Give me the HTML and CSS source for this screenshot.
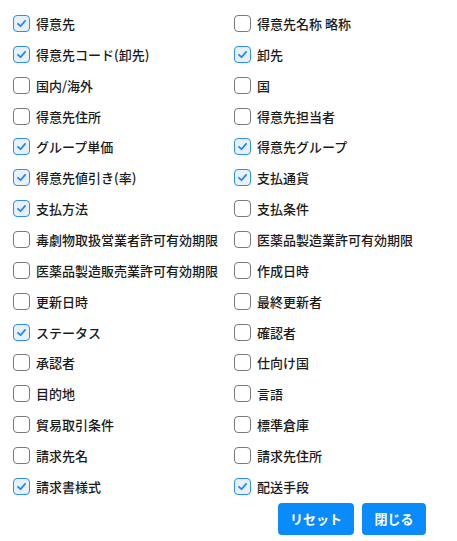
FILE: index.html
```html
<!DOCTYPE html>
<html lang="ja">
<head>
<meta charset="utf-8">
<link rel="stylesheet" href="styles.css">
</head>
<body>
<div class="panel">
  <div class="grid">
    <label class="item"><span class="box on"><svg viewBox="0 0 17 17"><path d="M4.5 8.8 L7.4 11.6 L12.6 5.6"/></svg></span>得意先</label>
    <label class="item"><span class="box"></span>得意先名称 略称</label>
    <label class="item"><span class="box on"><svg viewBox="0 0 17 17"><path d="M4.5 8.8 L7.4 11.6 L12.6 5.6"/></svg></span>得意先コード(卸先)</label>
    <label class="item"><span class="box on"><svg viewBox="0 0 17 17"><path d="M4.5 8.8 L7.4 11.6 L12.6 5.6"/></svg></span>卸先</label>
    <label class="item"><span class="box"></span>国内/海外</label>
    <label class="item"><span class="box"></span>国</label>
    <label class="item"><span class="box"></span>得意先住所</label>
    <label class="item"><span class="box"></span>得意先担当者</label>
    <label class="item"><span class="box on"><svg viewBox="0 0 17 17"><path d="M4.5 8.8 L7.4 11.6 L12.6 5.6"/></svg></span>グループ単価</label>
    <label class="item"><span class="box on"><svg viewBox="0 0 17 17"><path d="M4.5 8.8 L7.4 11.6 L12.6 5.6"/></svg></span>得意先グループ</label>
    <label class="item"><span class="box on"><svg viewBox="0 0 17 17"><path d="M4.5 8.8 L7.4 11.6 L12.6 5.6"/></svg></span>得意先値引き(率)</label>
    <label class="item"><span class="box on"><svg viewBox="0 0 17 17"><path d="M4.5 8.8 L7.4 11.6 L12.6 5.6"/></svg></span>支払通貨</label>
    <label class="item"><span class="box on"><svg viewBox="0 0 17 17"><path d="M4.5 8.8 L7.4 11.6 L12.6 5.6"/></svg></span>支払方法</label>
    <label class="item"><span class="box"></span>支払条件</label>
    <label class="item"><span class="box"></span>毒劇物取扱営業者許可有効期限</label>
    <label class="item"><span class="box"></span>医薬品製造業許可有効期限</label>
    <label class="item"><span class="box"></span>医薬品製造販売業許可有効期限</label>
    <label class="item"><span class="box"></span>作成日時</label>
    <label class="item"><span class="box"></span>更新日時</label>
    <label class="item"><span class="box"></span>最終更新者</label>
    <label class="item"><span class="box on"><svg viewBox="0 0 17 17"><path d="M4.5 8.8 L7.4 11.6 L12.6 5.6"/></svg></span>ステータス</label>
    <label class="item"><span class="box"></span>確認者</label>
    <label class="item"><span class="box"></span>承認者</label>
    <label class="item"><span class="box"></span>仕向け国</label>
    <label class="item"><span class="box"></span>目的地</label>
    <label class="item"><span class="box"></span>言語</label>
    <label class="item"><span class="box"></span>貿易取引条件</label>
    <label class="item"><span class="box"></span>標準倉庫</label>
    <label class="item"><span class="box"></span>請求先名</label>
    <label class="item"><span class="box"></span>請求先住所</label>
    <label class="item"><span class="box on"><svg viewBox="0 0 17 17"><path d="M4.5 8.8 L7.4 11.6 L12.6 5.6"/></svg></span>請求書様式</label>
    <label class="item"><span class="box on"><svg viewBox="0 0 17 17"><path d="M4.5 8.8 L7.4 11.6 L12.6 5.6"/></svg></span>配送手段</label>
  </div>
  <div class="actions">
    <button class="btn reset">リセット</button>
    <button class="btn close">閉じる</button>
  </div>
</div>
</body>
</html>
```

FILE: styles.css
```css
html, body {
  margin: 0;
  padding: 0;
  background: #fff;
}
body {
  font-family: "Noto Sans CJK JP", "Noto Sans", sans-serif;
  color: #1a1a1a;
}
.panel {
  width: 457px;
  height: 541px;
  box-sizing: border-box;
  padding: 15px 31px 0 13px;
}
.grid {
  display: grid;
  grid-template-columns: 221px 1fr;
  grid-auto-rows: 17px;
  row-gap: 13.87px;
}
.item {
  display: flex;
  align-items: center;
  gap: 6px;
  font-size: 13px;
  font-weight: 500;
  line-height: 17px;
  white-space: nowrap;
}
.box {
  width: 17px;
  height: 17px;
  box-sizing: border-box;
  border: 1px solid #7a7a7a;
  border-radius: 4px;
  background: #fff;
  flex: none;
  display: flex;
}
.box.on {
  border-color: #2f8ff0;
  background: #e6f1fd;
}
.box svg {
  width: 15px;
  height: 15px;
}
.box path {
  fill: none;
  stroke: #2486ee;
  stroke-width: 2;
  stroke-linecap: round;
  stroke-linejoin: round;
}
.actions {
  display: flex;
  justify-content: flex-end;
  gap: 8px;
  margin-top: 8px;
}
.btn {
  height: 32px;
  border: none;
  border-radius: 4px;
  background: #0a8bfa;
  color: #fff;
  font-family: "Noto Sans CJK JP", sans-serif;
  font-weight: 700;
  font-size: 13px;
  padding: 0;
}
.reset { width: 76px; }
.close { width: 64px; }
```
